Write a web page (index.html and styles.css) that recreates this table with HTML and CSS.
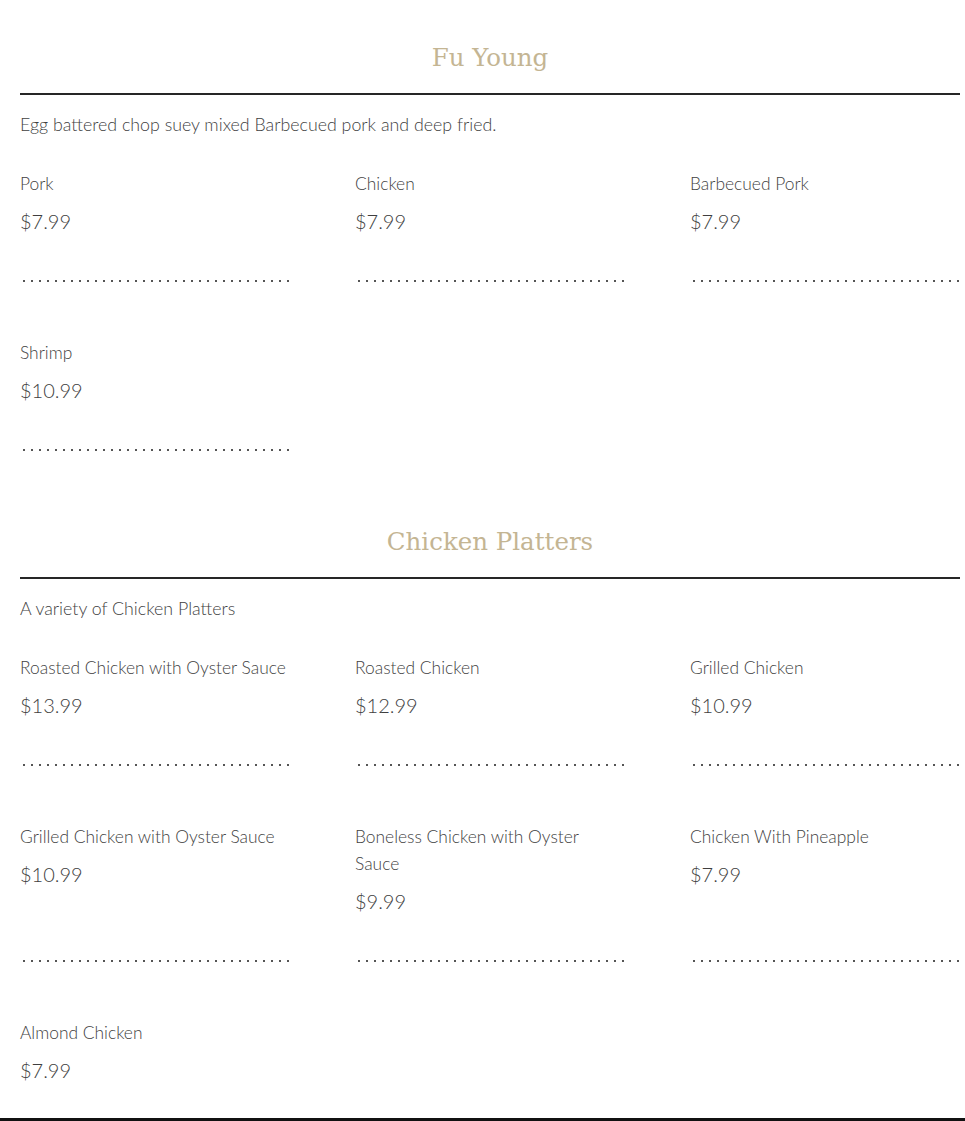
FILE: index.html
```html
<!DOCTYPE html>
<html lang="en">
<head>
<meta charset="utf-8">
<title>Menu</title>
<link rel="stylesheet" href="styles.css">
</head>
<body>
<main class="menu">
  <section class="section">
    <h2 class="section-title">Fu Young</h2>
    <p class="section-desc">Egg battered chop suey mixed Barbecued pork and deep fried.</p>
    <div class="items">
      <div class="item"><div class="item-name">Pork</div><div class="item-price">$7.99</div><div class="dots"></div></div>
      <div class="item"><div class="item-name">Chicken</div><div class="item-price">$7.99</div><div class="dots"></div></div>
      <div class="item"><div class="item-name">Barbecued Pork</div><div class="item-price">$7.99</div><div class="dots"></div></div>
      <div class="item"><div class="item-name">Shrimp</div><div class="item-price">$10.99</div><div class="dots"></div></div>
    </div>
  </section>
  <section class="section">
    <h2 class="section-title">Chicken Platters</h2>
    <p class="section-desc">A variety of Chicken Platters</p>
    <div class="items">
      <div class="item"><div class="item-name">Roasted Chicken with Oyster Sauce</div><div class="item-price">$13.99</div><div class="dots"></div></div>
      <div class="item"><div class="item-name">Roasted Chicken</div><div class="item-price">$12.99</div><div class="dots"></div></div>
      <div class="item"><div class="item-name">Grilled Chicken</div><div class="item-price">$10.99</div><div class="dots"></div></div>
      <div class="item"><div class="item-name">Grilled Chicken with Oyster Sauce</div><div class="item-price">$10.99</div><div class="dots"></div></div>
      <div class="item"><div class="item-name">Boneless Chicken with Oyster Sauce</div><div class="item-price">$9.99</div><div class="dots"></div></div>
      <div class="item"><div class="item-name">Chicken With Pineapple</div><div class="item-price">$7.99</div><div class="dots"></div></div>
      <div class="item"><div class="item-name">Almond Chicken</div><div class="item-price">$7.99</div><div class="dots"></div></div>
    </div>
  </section>
</main>
<div class="footer-line"></div>
</body>
</html>
```
FILE: styles.css
```css
html, body {
  margin: 0;
  padding: 0;
  background: #ffffff;
}
body {
  font-family: Lato, "Open Sans", sans-serif;
  font-weight: 300;
  color: #3f3f3f;
}
.menu {
  padding: 0 5px 0 20px;
}
.section {
  padding-top: 38px;
  padding-bottom: 33px;
}
.section-title {
  margin: 0;
  font-family: "DejaVu Serif", "Liberation Serif", serif;
  font-weight: normal;
  font-size: 24.5px;
  line-height: 40px;
  color: #c4b593;
  text-align: center;
  padding-bottom: 15px;
  border-bottom: 2px solid #262626;
}
.section-desc {
  margin: 16px 0 0;
  font-size: 17.8px;
  line-height: 27px;
}
.items {
  display: grid;
  grid-template-columns: repeat(3, 1fr);
  column-gap: 65px;
  row-gap: 57px;
  margin-top: 32px;
}
.item {
  display: flex;
  flex-direction: column;
}
.item-name {
  font-size: 17.4px;
  line-height: 27px;
}
.item-price {
  margin-top: 9px;
  margin-bottom: 44px;
  font-size: 20px;
  line-height: 30px;
}
.dots {
  margin-top: auto;
  height: 2px;
  width: 270px;
  background-image: radial-gradient(circle, #555 0.8px, transparent 1px);
  background-size: 8px 2px;
  background-repeat: repeat-x;
}
.footer-line {
  position: fixed;
  left: 0;
  right: 0;
  bottom: 0;
  height: 3px;
  background: #111;
}
```
